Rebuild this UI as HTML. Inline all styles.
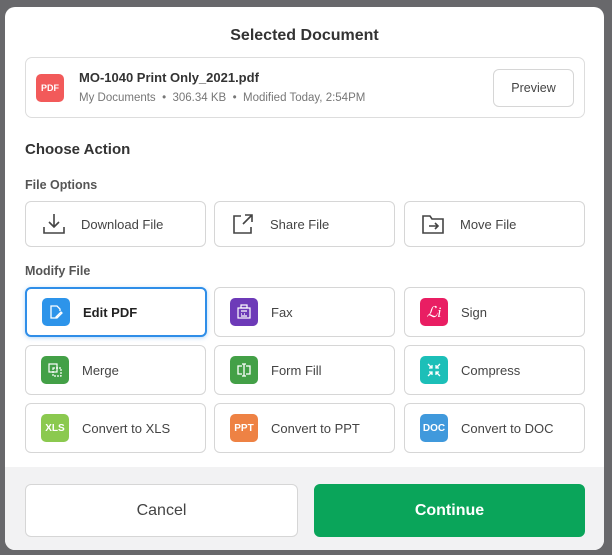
<!DOCTYPE html>
<html><head><style>
*{box-sizing:border-box;margin:0;padding:0}
body{width:612px;height:555px;background:#68686b;font-family:"Liberation Sans",sans-serif;position:relative;overflow:hidden;color:#333}
.modal{position:absolute;left:5px;top:7px;width:599px;height:543px;background:#fff;border-radius:10px;overflow:hidden}
.abs{position:absolute}
.title{left:0;width:100%;top:20px;text-align:center;font-size:16px;font-weight:bold;color:#333}
.doc{left:20px;top:50px;width:560px;height:61px;border:1px solid #ddd;border-radius:7px}
.pdf{left:10px;top:16px;width:28px;height:28px;border-radius:5px;background:#f25a5a;color:#fff;font-size:9px;font-weight:bold;text-align:center;line-height:28px}
.btn{position:absolute;border:1px solid #d6d6d6;border-radius:6px;background:#fff;font-size:13px;color:#444;display:flex;align-items:center}
.btn .ic{width:28px;height:28px;border-radius:5px;margin-left:15px;margin-right:13px;display:flex;align-items:center;justify-content:center;color:#fff;font-size:10px;font-weight:bold}
.lbl{font-size:12.5px;color:#555;font-weight:bold}
.footer{left:0;top:460px;width:100%;height:83px;background:#f2f2f3}
</style></head><body>
<div class="modal">
<div class="abs title">Selected Document</div>
<div class="abs doc">
 <div class="abs pdf">PDF</div>
 <div class="abs" style="left:53px;top:12px;font-size:13px;font-weight:bold;color:#333">MO-1040 Print Only_2021.pdf</div>
 <div class="abs" style="left:53px;top:34px;font-size:11.5px;color:#777">My Documents &nbsp;•&nbsp; 306.34 KB &nbsp;•&nbsp; Modified Today, 2:54PM</div>
 <div class="btn" style="left:467px;top:11px;width:81px;height:38px;justify-content:center;font-size:12.5px">Preview</div>
</div>
<div class="abs" style="left:20px;top:134px;font-size:15px;font-weight:bold;color:#333">Choose Action</div>
<div class="abs lbl" style="left:20px;top:171px">File Options</div>
<div class="btn" style="left:20px;top:194px;width:181px;height:46px"><span class="ic" style="margin-left:14px"><svg width="26" height="26" viewBox="0 0 26 26" fill="none" stroke="#444" stroke-width="1.6"><path d="M13 3v13M8 11l5 5 5-5M3 16v6h20v-6"/></svg></span>Download File</div>
<div class="btn" style="left:209px;top:194px;width:181px;height:46px"><span class="ic" style="margin-left:14px"><svg width="26" height="26" viewBox="0 0 26 26" fill="none" stroke="#444" stroke-width="1.6"><path d="M11 5H4v17h17v-6M15 4h7v7M22 4l-9 9"/></svg></span>Share File</div>
<div class="btn" style="left:399px;top:194px;width:181px;height:46px"><span class="ic" style="margin-left:14px"><svg width="26" height="26" viewBox="0 0 26 26" fill="none" stroke="#444" stroke-width="1.6"><path d="M3 5h7l2 3h11v14H3zM9 15h9M15 12l3 3-3 3"/></svg></span>Move File</div>
<div class="abs lbl" style="left:20px;top:257px">Modify File</div>
<div class="btn" style="left:20px;top:280px;width:182px;height:50px;border:2px solid #2f8ee8;font-weight:bold;color:#222;box-shadow:0 1px 4px rgba(47,142,232,.35)"><span class="ic" style="background:#2d94ea"><svg width="16" height="16" viewBox="0 0 16 16" fill="none" stroke="#fff" stroke-width="1.3"><path d="M9 14H3V2h6l3 3v2M8 13l5-5 1 1-5 5H8z"/></svg></span>Edit PDF</div>
<div class="btn" style="left:209px;top:280px;width:181px;height:50px"><span class="ic" style="background:#6d3ab8"><svg width="16" height="16" viewBox="0 0 16 16" fill="none" stroke="#fff" stroke-width="1.2"><rect x="2" y="4" width="12" height="10"/><rect x="5" y="1" width="6" height="3"/><path d="M5 7h6M5 10h1M8 10h1M11 10h0M5 12h6"/></svg></span>Fax</div>
<div class="btn" style="left:399px;top:280px;width:181px;height:50px"><span class="ic" style="background:#e91e63;font-style:italic;font-family:'Liberation Serif',serif;font-size:15px;font-weight:normal">ℒi</span>Sign</div>
<div class="btn" style="left:20px;top:338px;width:181px;height:50px"><span class="ic" style="background:#43a047"><svg width="16" height="16" viewBox="0 0 16 16" fill="none" stroke="#fff" stroke-width="1.2"><rect x="2" y="2" width="8" height="8"/><rect x="6" y="6" width="8" height="8" stroke-dasharray="2 1"/></svg></span>Merge</div>
<div class="btn" style="left:209px;top:338px;width:181px;height:50px"><span class="ic" style="background:#43a047"><svg width="16" height="16" viewBox="0 0 16 16" fill="none" stroke="#fff" stroke-width="1.3"><path d="M6 4H2v8h4M10 4h4v8h-4M8 2v12M6 2h4M6 14h4"/></svg></span>Form Fill</div>
<div class="btn" style="left:399px;top:338px;width:181px;height:50px"><span class="ic" style="background:#1cbfb8"><svg width="16" height="16" viewBox="0 0 16 16" fill="none" stroke="#fff" stroke-width="1.3"><path d="M2 2l4 4M6 3v3H3M14 2l-4 4M10 3v3h3M2 14l4-4M6 13v-3H3M14 14l-4-4M10 13v-3h3"/></svg></span>Compress</div>
<div class="btn" style="left:20px;top:396px;width:181px;height:50px"><span class="ic" style="background:#8bc94f">XLS</span>Convert to XLS</div>
<div class="btn" style="left:209px;top:396px;width:181px;height:50px"><span class="ic" style="background:#ee8244">PPT</span>Convert to PPT</div>
<div class="btn" style="left:399px;top:396px;width:181px;height:50px"><span class="ic" style="background:#4099dc">DOC</span>Convert to DOC</div>
<div class="abs footer">
 <div class="btn" style="left:20px;top:17px;width:273px;height:53px;justify-content:center;font-size:16px;color:#444">Cancel</div>
 <div class="btn" style="left:309px;top:17px;width:271px;height:53px;justify-content:center;font-size:16px;font-weight:bold;color:#fff;background:#0aa55a;border-color:#0aa55a">Continue</div>
</div>
</div>
</body></html>
